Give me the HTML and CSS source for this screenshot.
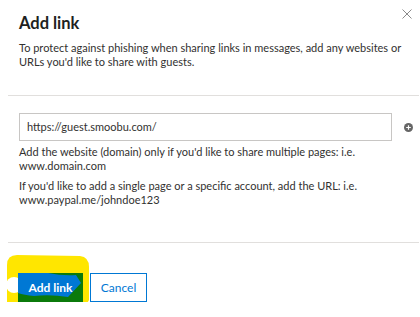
FILE: index.html
```html
<!DOCTYPE html>
<html lang="en">
<head>
  <meta charset="UTF-8" />
  <title>Add link</title>
  <link rel="stylesheet" href="styles.css">
</head>
<body>
  <section class="top">
    <div class="head">
      <h1>Add link</h1>
      <button class="close" aria-label="Close">
        <svg width="10" height="10" viewBox="0 0 10 10"><path d="M0.5 0.5L9.5 9.5M9.5 0.5L0.5 9.5" stroke="#8a8a8a" stroke-width="1" fill="none"/></svg>
      </button>
    </div>
    <p class="desc">To protect against phishing when sharing links in messages, add any websites or URLs you'd like to share with guests.</p>
  </section>

  <div class="rule"></div>

  <section class="main">
    <div class="field">
      <div class="input">https://guest.smoobu.com/</div>
      <span class="add">
        <svg width="9" height="9" viewBox="0 0 9 9"><circle cx="4.5" cy="4.5" r="4.5" fill="#666"/><path d="M4.5 2.2V6.8M2.2 4.5H6.8" stroke="#fff" stroke-width="1.2"/></svg>
      </span>
    </div>
    <div class="help">
      <p>Add the website (domain) only if you'd like to share multiple pages: i.e. www.domain.com</p>
      <p>If you'd like to add a single page or a specific account, add the URL: i.e. www.paypal.me/johndoe123</p>
    </div>
  </section>

  <div class="rule"></div>

  <section class="foot">
    <!-- highlighter marks drawn on the screenshot -->
    <svg class="marker" width="100" height="74" viewBox="0 0 100 74">
      <path d="M7 22 Q7 12 17 12 L80 13 Q89 14 89 24 L89 57 L82 69 L10 69 Q7 69 7 64 Z" fill="#ffe600"/>
      <ellipse cx="14" cy="42" rx="8" ry="8" fill="#fff"/>
    </svg>
    <button class="btn primary">
      <svg class="blob" width="65" height="29" viewBox="0 0 65 29"><path d="M0 0 L30 0 Q45 3 58 2 L63 10 L50 24 Q32 21 16 23 Q6 22 0 20 Z" fill="#0078d4"/></svg>
      <span>Add link</span>
    </button>
    <button class="btn secondary">Cancel</button>
  </section>
</body>
</html>
```

FILE: styles.css
```css
* {
  margin: 0;
  padding: 0;
  box-sizing: border-box;
}
body {
  font-family: 'Lato', sans-serif;
  background: #fff;
  color: #323130;
  width: 420px;
}
.top {
  height: 95px;
  padding: 9px 8px 0 19px;
}
.head {
  display: flex;
  justify-content: space-between;
  align-items: flex-start;
}
.head h1 {
  margin-top: 5px;
  font-size: 16.5px;
  line-height: 18px;
  font-weight: bold;
  color: #201f1e;
}
.close {
  border: none;
  background: none;
  width: 10px;
  height: 10px;
  line-height: 0;
}
.desc {
  margin-top: 9px;
  font-size: 11px;
  line-height: 13.5px;
  padding-right: 2px;
}
.rule {
  height: 1px;
  background: #e1dfdd;
  margin: 0 1px 0 8px;
}
.main {
  height: 146px;
  padding: 17px 0 0 19px;
}
.field {
  display: flex;
  align-items: center;
}
.input {
  width: 373px;
  height: 28px;
  border: 1px solid #c8c6c4;
  padding: 0 7px;
  font-size: 11px;
  line-height: 26px;
  color: #323130;
}
.add {
  margin-left: 12px;
  line-height: 0;
}
.help {
  width: 373px;
  font-size: 11px;
  line-height: 14px;
}
.help p {
  margin-top: 6px;
}
.help p:first-child {
  margin-top: 4px;
}
.foot {
  position: relative;
  padding: 30px 0 0 18px;
  display: flex;
  gap: 7px;
}
.marker {
  position: absolute;
  left: 0;
  top: 0;
}
.btn {
  position: relative;
  height: 29px;
  font-family: 'Lato', sans-serif;
  font-size: 12px;
  cursor: pointer;
}
.primary {
  width: 65px;
  border: none;
  background: #0b7a0b;
  color: #fff;
  font-weight: bold;
}
.primary .blob {
  position: absolute;
  left: 0;
  top: 0;
}
.primary span {
  position: relative;
}
.secondary {
  width: 57px;
  border: 1px solid #0078d4;
  background: #fff;
  color: #0078d4;
}
```
